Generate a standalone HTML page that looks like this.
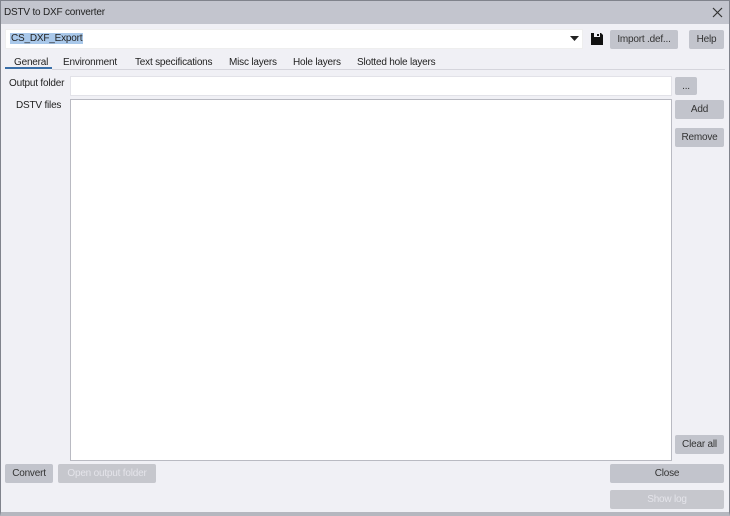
<!DOCTYPE html><html><head><style>
*{margin:0;padding:0;box-sizing:border-box}
body{width:730px;height:516px;overflow:hidden;background:#f0f0f5;font-family:"Liberation Sans",sans-serif;font-size:10px;letter-spacing:-0.2px;color:#222;position:relative}
.a{position:absolute}
.win{left:0;top:0;width:730px;height:516px;border:1px solid #80838c;border-bottom:4px solid #b5b7bf}
.title{left:0;top:0;width:730px;height:24px;background:#c3c5ce;border:1px solid #80838c;border-bottom:none}
.btn{position:absolute;background:#c2c4cc;border-radius:2px;display:flex;align-items:center;justify-content:center;color:#333}
.dis{color:#e4e4ea;background:#c6c7cd}
.box{position:absolute;background:#fff;border:1px solid #e2e2e8}
.tab{position:absolute;top:57px}
</style></head><body>
<div class="a win"></div>
<div class="a title"></div>
<div class="a" style="left:4px;top:7px">DSTV to DXF converter</div>
<svg class="a" style="left:712px;top:7px" width="11" height="11"><path d="M1 1L10 10M10 1L1 10" stroke="#333" stroke-width="1.2"/></svg>
<div class="box" style="left:5px;top:29px;width:578px;height:20px;border-color:#eee"></div>
<div class="a" style="left:10px;top:33px;background:#a9c8ea;padding:0 1px;color:#222">CS_DXF_Export</div>
<svg class="a" style="left:570px;top:36px" width="10" height="6"><path d="M0 0H9L4.5 5Z" fill="#222"/></svg>
<svg class="a" style="left:591px;top:33px" width="12" height="12"><path d="M0 0H10L12 2V12H0Z" fill="#111"/><rect x="3" y="0" width="6" height="4" fill="#f0f0f5"/><rect x="6" y="1" width="2" height="2" fill="#111"/></svg>
<div class="btn" style="left:610px;top:30px;width:68px;height:19px">Import .def...</div>
<div class="btn" style="left:689px;top:30px;width:35px;height:19px">Help</div>
<div class="tab" style="left:14px">General</div>
<div class="a" style="left:5px;top:67px;width:47px;height:2px;background:#3a6fa8"></div>
<div class="tab" style="left:63px">Environment</div>
<div class="tab" style="left:135px">Text specifications</div>
<div class="tab" style="left:229px">Misc layers</div>
<div class="tab" style="left:293px">Hole layers</div>
<div class="tab" style="left:357px">Slotted hole layers</div>
<div class="a" style="left:52px;top:69px;width:673px;height:1px;background:#d5d5dc"></div>
<div class="a" style="left:9px;top:78px">Output folder</div>
<div class="box" style="left:70px;top:76px;width:602px;height:20px"></div>
<div class="btn" style="left:675px;top:77px;width:22px;height:18px">...</div>
<div class="a" style="left:16px;top:100px">DSTV files</div>
<div class="box" style="left:70px;top:99px;width:602px;height:362px;border-color:#b9bac2"></div>
<div class="btn" style="left:675px;top:100px;width:49px;height:19px">Add</div>
<div class="btn" style="left:675px;top:128px;width:49px;height:19px">Remove</div>
<div class="btn" style="left:675px;top:435px;width:49px;height:19px">Clear all</div>
<div class="btn" style="left:5px;top:464px;width:48px;height:19px">Convert</div>
<div class="btn dis" style="left:58px;top:464px;width:98px;height:19px">Open output folder</div>
<div class="btn" style="left:610px;top:464px;width:114px;height:19px">Close</div>
<div class="btn dis" style="left:610px;top:490px;width:114px;height:19px">Show log</div>
</body></html>
